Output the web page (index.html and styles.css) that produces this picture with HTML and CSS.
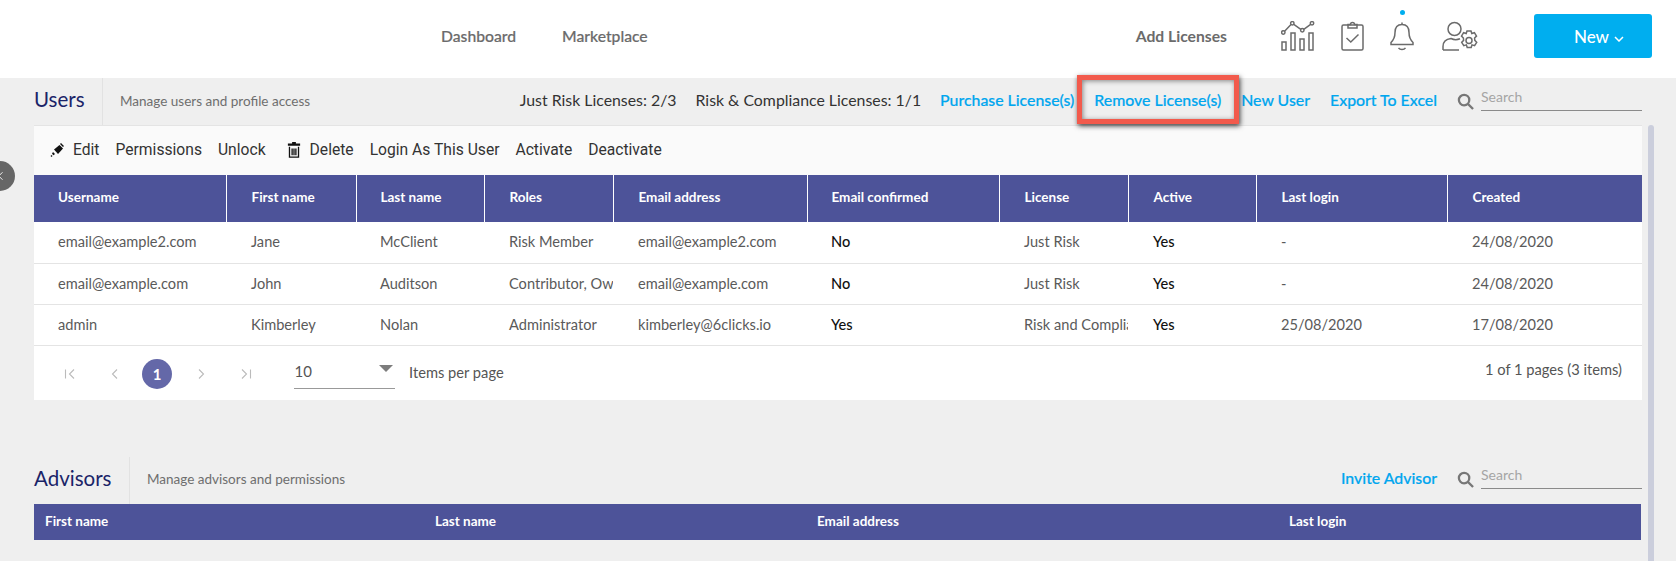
FILE: index.html
```html
<!DOCTYPE html>
<html lang="en">
<head>
<meta charset="utf-8">
<title>Users</title>
<link rel="stylesheet" href="styles.css">
</head>
<body>
<header class="topbar">
  <nav class="main-nav">
    <a>Dashboard</a>
    <a>Marketplace</a>
  </nav>
  <div class="top-actions">
    <a class="add-licenses">Add Licenses</a>
    <svg class="ico ico-chart" viewBox="0 0 34 30" fill="none" stroke="#6b6b6b" stroke-width="1.500"><circle cx="2.300" cy="11.500" r="1.700"/><circle cx="11.300" cy="2.300" r="1.700"/><circle cx="21.300" cy="9.300" r="1.700"/><circle cx="31" cy="2.300" r="1.700"/><path d="M3.600 10.200 10 3.500M12.800 3.300 19.800 8.300M22.800 8.300 29.600 3.400"/><rect x="1" y="21" width="4" height="8"/><rect x="10" y="12" width="4" height="17"/><rect x="19" y="18" width="4" height="11"/><rect x="28" y="12" width="4" height="17"/></svg>
    <svg class="ico ico-check" viewBox="0 0 23 30" fill="none" stroke="#6b6b6b" stroke-width="1.500"><rect x="1" y="4" width="21" height="25" rx="1.500"/><path d="M7 7V3.500h2.500a2 2 0 0 1 4 0H16V7z"/><path d="M5.500 17 9.800 21 17.500 13.500"/></svg>
    <span class="bell-wrap">
      <i class="bell-dot"></i>
      <svg class="ico ico-bell" viewBox="0 0 24 30" fill="none" stroke="#6b6b6b" stroke-width="1.500"><path d="M12 1.500V3.500M12 3.500c-4.800 0-7 3.500-7 8 0 5-1.500 7.500-4 10v2h22v-2c-2.500-2.500-4-5-4-10 0-4.500-2.200-8-7-8z"/><path d="M8.500 26.800c1.500 2.200 5.500 2.200 7 0"/></svg>
    </span>
    <svg class="ico ico-user" viewBox="0 0 36 30" fill="none" stroke="#6b6b6b" stroke-width="1.500"><circle cx="12.500" cy="8" r="6.500"/><path d="M1 29v-3.500C1 20 5 18 9 17.500c3 1.500 6 1.500 9 .3M1 29h16"/><circle cx="27" cy="19.500" r="3"/><path d="M25 10h4l.8 2.500 2.600-.8 2.100 3.400-1.900 1.900.2 2.400 1.900 1.900-2.100 3.400-2.600-.8-.8 2.600h-4l-.8-2.600-2.600.8-2.100-3.400 1.900-1.900-.2-2.400-1.900-1.900 2.100-3.400 2.600.8z"/></svg>
    <button class="new-btn">New<svg class="chev" viewBox="0 0 10 6" fill="none" stroke="#fff" stroke-width="1.500"><path d="M1 1 5 5 9 1"/></svg></button>
  </div>
</header>

<main class="page">
  <section class="section">
    <div class="sec-head">
      <h2 class="sec-title users-title">Users</h2>
      <p class="sec-desc">Manage users and profile access</p>
      <div class="sec-right">
        <span class="count">Just Risk Licenses: 2/3</span>
        <span class="count">Risk &amp; Compliance Licenses: 1/1</span>
        <a class="link">Purchase License(s)</a>
        <a class="link">Remove License(s)</a>
        <a class="link">New User</a>
        <a class="link">Export To Excel</a>
        <div class="search">
          <svg class="search-ico" viewBox="0 0 18 18" fill="none" stroke="#777" stroke-width="2.400"><circle cx="7.500" cy="7.500" r="5.500"/><path d="M11.500 11.500 17 17"/></svg>
          <span class="search-box">Search</span>
        </div>
      </div>
    </div>
    <div class="toolbar">
      <span class="tool"><svg class="tool-ico" viewBox="0 0 16 16"><path fill="#111" d="M5 7.500 10.500 3l3.500 3.500L9 12z"/><path fill="#111" d="M11 2l1-1 3 3-1 1zM1.500 14l1-1 1 1-1 1z"/><path fill="#111" d="M4 10l2 2-1.500 1.200-1.500-1.500z"/></svg>Edit</span>
      <span class="tool">Permissions</span>
      <span class="tool">Unlock</span>
      <span class="tool tool-del"><svg class="tool-ico" viewBox="0 0 14 17"><path fill="#111" d="M5 0h4v1.500h4.500V4H.5V1.500H5z"/><path fill="none" stroke="#111" stroke-width="1.400" d="M2.200 5v11h9.600V5M5 7v7M7 7v7M9 7v7"/></svg>Delete</span>
      <span class="tool">Login As This User</span>
      <span class="tool">Activate</span>
      <span class="tool">Deactivate</span>
    </div>
    <table class="grid users">
      <colgroup>
        <col class="c192"><col class="c130"><col class="c128"><col class="c129"><col class="c194"><col class="c192"><col class="c129"><col class="c128"><col class="c191"><col>
      </colgroup>
      <thead>
        <tr><th>Username</th><th>First name</th><th>Last name</th><th>Roles</th><th>Email address</th><th>Email confirmed</th><th>License</th><th>Active</th><th>Last login</th><th>Created</th></tr>
      </thead>
      <tbody>
        <tr><td>email@example2.com</td><td>Jane</td><td>McClient</td><td>Risk Member</td><td>email@example2.com</td><td class="strong">No</td><td>Just Risk</td><td class="strong">Yes</td><td>-</td><td>24/08/2020</td></tr>
        <tr><td>email@example.com</td><td>John</td><td>Auditson</td><td>Contributor, Owner</td><td>email@example.com</td><td class="strong">No</td><td>Just Risk</td><td class="strong">Yes</td><td>-</td><td>24/08/2020</td></tr>
        <tr><td>admin</td><td>Kimberley</td><td>Nolan</td><td>Administrator</td><td>kimberley@6clicks.io</td><td class="strong">Yes</td><td>Risk and Compliance</td><td class="strong">Yes</td><td>25/08/2020</td><td>17/08/2020</td></tr>
      </tbody>
    </table>
    <div class="pager">
      <div class="pager-nums">
        <svg class="pg" viewBox="0 0 12 12" fill="none" stroke="#bbb" stroke-width="1.100"><path d="M1.500 1.500v9M10 1.500 5.500 6l4.500 4.500"/></svg>
        <svg class="pg" viewBox="0 0 12 12" fill="none" stroke="#bbb" stroke-width="1.100"><path d="M8 1.500 3.500 6 8 10.500"/></svg>
        <span class="pg-current">1</span>
        <svg class="pg" viewBox="0 0 12 12" fill="none" stroke="#bbb" stroke-width="1.100"><path d="M4 1.500 8.500 6 4 10.500"/></svg>
        <svg class="pg" viewBox="0 0 12 12" fill="none" stroke="#bbb" stroke-width="1.100"><path d="M10.500 1.500v9M2 1.500 6.500 6 2 10.500"/></svg>
      </div>
      <div class="pg-size"><span>10</span><i class="caret"></i></div>
      <span class="pg-label">Items per page</span>
      <span class="pg-info">1 of 1 pages (3 items)</span>
    </div>
  </section>

  <section class="section advisors">
    <div class="sec-head adv-head">
      <h2 class="sec-title adv-title">Advisors</h2>
      <p class="sec-desc">Manage advisors and permissions</p>
      <div class="sec-right">
        <a class="link">Invite Advisor</a>
        <div class="search">
          <svg class="search-ico" viewBox="0 0 18 18" fill="none" stroke="#777" stroke-width="2.400"><circle cx="7.500" cy="7.500" r="5.500"/><path d="M11.500 11.500 17 17"/></svg>
          <span class="search-box">Search</span>
        </div>
      </div>
    </div>
    <table class="grid adv">
      <colgroup><col class="a1"><col class="a2"><col class="a3"><col></colgroup>
      <thead><tr><th>First name</th><th>Last name</th><th>Email address</th><th>Last login</th></tr></thead>
    </table>
  </section>
</main>

<div class="collapse-knob"><svg viewBox="0 0 8 12" fill="none" stroke="#fff" stroke-width="1.200"><path d="M6 1 1 6 6 11"/></svg></div>
<div class="scroll-thumb"></div>
<div class="annot"></div>
</body>
</html>
```

FILE: styles.css
```css
* { box-sizing: border-box; }
html, body { margin: 0; padding: 0; height: 561px; overflow: hidden; }
body {
  position: relative;
  width: 1676px;
  background: #efefef;
  font-family: Lato, "Liberation Sans", sans-serif;
  color: #555;
}
.topbar {
  height: 78px;
  background: #fff;
  display: flex;
  align-items: center;
  padding: 0 24px 6px 441px;
}
.main-nav { display: flex; gap: 46px; font-size: 15.700px; font-weight: 500; color: #6b6b6b; -webkit-text-stroke: 0.2px #6b6b6b; }
.top-actions { margin-left: auto; display: flex; align-items: center; }
.add-licenses { font-size: 15.700px; font-weight: 700; color: #6b6b6b; margin-right: 54px; }
.ico { display: block; height: 30px; }
.ico-chart { width: 34px; margin-right: 26px; }
.ico-check { width: 23px; margin-right: 26px; }
.ico-bell { width: 24px; }
.ico-user { width: 36px; margin-left: 28px; }
.bell-wrap { position: relative; display: block; }
.bell-dot { position: absolute; left: 10px; top: -11px; width: 5px; height: 5px; border-radius: 50%; background: #00aeef; }
.new-btn {
  margin-left: 56px;
  width: 118px;
  height: 44px;
  border: 0;
  border-radius: 3px;
  background: #00aeef;
  color: #fff;
  padding: 1px 0 0 12px;
  font: 500 17px Lato, sans-serif;
}
.chev { width: 10px; height: 6px; margin-left: 5px; vertical-align: 1px; }

.page { padding: 0 34px 0 34px; }
.sec-head { display: flex; align-items: center; height: 47px; }
.sec-title { margin: 0; padding-bottom: 5px; font-size: 20.500px; font-weight: 400; color: #1a2468; border-right: 1px solid #e2e2e2; height: 100%; display: flex; align-items: center; }
.users-title { width: 69px; }
.adv-title { width: 96px; }
.sec-desc { margin: 0 0 0 17px; padding-bottom: 2px; font-size: 13.500px; color: #6e6e6e; }
.sec-right { margin-left: auto; padding-bottom: 5px; display: flex; align-items: center; font-size: 15.850px; }
.count { color: #333; margin-right: 19px; }
.link { color: #00a6ee; font-weight: 500; margin-right: 20px; -webkit-text-stroke: 0.2px #00a6ee; }
.search { display: flex; align-items: flex-end; gap: 7px; width: 185px; }
.search-ico { width: 17px; height: 17px; margin-bottom: 1px; }
.search-box { flex: 1; border-bottom: 1px solid #8a8a8a; font-size: 14px; color: #a5a5a5; height: 23px; line-height: 18px; }

.toolbar {
  height: 50px;
  background: #fafafa;
  border-top: 1px solid #e4e4e4;
  display: flex;
  align-items: center;
  gap: 16px;
  padding: 0 0 2px 15px;
  font-family: Roboto, sans-serif;
  font-size: 15.650px;
  color: #333;
}
.tool { display: flex; align-items: center; }
.tool-ico { width: 16px; height: 16px; margin-right: 8px; }
.tool-del { margin-left: 4px; }

.grid { width: 1608px; border-collapse: collapse; table-layout: fixed; }
.c192 { width: 192px; } .c130 { width: 130px; } .c129 { width: 129px; } .c128 { width: 128px; } .c194 { width: 194px; } .c191 { width: 191px; }
.grid th {
  background: #4d5399;
  color: #fff;
  font-size: 13.500px;
  font-weight: 700;
  text-align: left;
  height: 47px;
  padding: 0 0 3px 25px;
  border-right: 1px solid #fff;
  white-space: nowrap;
}
.grid th:last-child { border-right: 0; }
.users td {
  background: #fff;
  height: 41px;
  padding: 0 0 1px 25px;
  font-size: 14.600px;
  color: #5a5a5a;
  border-bottom: 1px solid #e4e4e4;
  white-space: nowrap;
  overflow: hidden;
}
.users th:nth-child(1), .users th:nth-child(3), .users th:nth-child(6),
.users td:nth-child(1), .users td:nth-child(3), .users td:nth-child(6) { padding-left: 24px; }
.users td.strong { color: #111; font-weight: 500; }

.pager {
  height: 54px;
  background: #fff;
  display: flex;
  align-items: center;
  font-size: 14.700px;
  color: #555;
  padding-right: 20px;
}
.pager-nums { display: flex; align-items: center; padding: 3px 0 0 13px; }
.pg { width: 12px; height: 12px; margin: 0 16.500px; }
.pg-current {
  width: 30px; height: 30px; border-radius: 50%;
  background: #6468a8; color: #fff;
  display: flex; align-items: center; justify-content: center;
  font-weight: 700; font-size: 15px;
  margin: 0 6px 0 5px;
}
.pg-size {
  margin: 2px 0 0 25.500px; width: 101px; height: 30px;
  border-bottom: 1px solid #999;
  display: flex; align-items: center; justify-content: space-between;
  font-size: 15px; color: #555; padding: 0 2px 4px 1px;
}
.caret { width: 0; height: 0; border: 7px solid transparent; border-top: 7px solid #7d7d7d; border-bottom: 0; margin-top: -6px; }
.pg-label { margin-left: 14.500px; padding-bottom: 1px; }
.pg-info { margin-left: auto; padding-bottom: 8px; }

.advisors { margin-top: 57px; }
.adv-head { height: 47px; }
.adv .a1 { width: 401px; } .adv .a2 { width: 382px; } .adv .a3 { width: 472px; }
.adv th { height: 36px; padding: 0 0 2px 11px; border: 0; }
.adv th:nth-child(2), .adv th:nth-child(3) { padding-left: 0; }
.adv th:nth-child(4) { padding-left: 0; }
.grid.adv { width: 1607px; }

.collapse-knob {
  position: absolute; left: -15px; top: 161px;
  width: 30px; height: 30px; border-radius: 50%;
  background: #666;
  display: flex; align-items: center; justify-content: flex-end; padding-right: 11px;
}
.collapse-knob svg { width: 6px; height: 10px; }
.scroll-thumb { position: absolute; left: 1648px; top: 125px; bottom: 0; width: 6px; background: #cbcedc; border-radius: 3px 3px 0 0; }
.annot {
  position: absolute; left: 1077px; top: 75px; width: 162px; height: 49px;
  border: 5px solid #f25a4c;
  box-shadow: 1px 2px 5px rgba(0,0,0,.75), inset 1px 1px 5px rgba(0,0,0,.45);
}
```
